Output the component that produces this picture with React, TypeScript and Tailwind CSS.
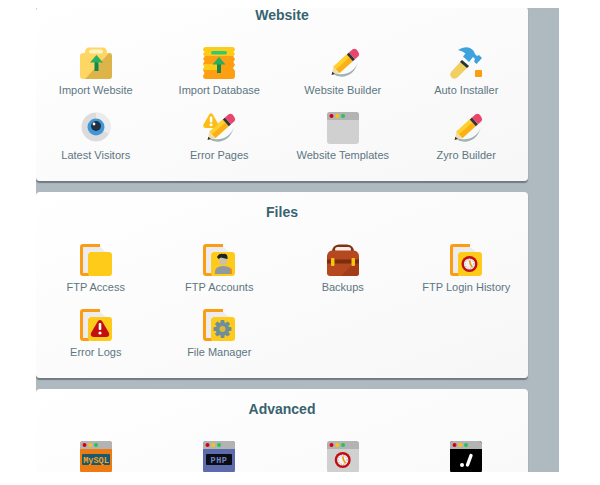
import React from "react";

const Pencil = () => (
  <>
    <path d="M5 25 C9 32 27 33 31 14.5 C28 26 15 30 7 25.5Z" fill="#9db4b2" />
    <path d="M6.4 19.7 L19.8 7.6 L25.8 14.2 L12.4 26.3Z" fill="#fbb015" />
    <path d="M6.4 19.7 L19.8 7.6 L22.3 10.4 L8.9 22.5Z" fill="#ffd02e" />
    <path d="M5 27 L6.4 19.7 L12.4 26.3Z" fill="#f3dba8" />
    <path d="M4.6 28 L5.4 24.8 L7.8 26.9Z" fill="#2f2f2f" />
    <path d="M19.8 7.6 L22 5.6 L28 12.2 L25.8 14.2Z" fill="#333" />
    <path d="M22 5.6 L25.7 2.3 Q27.5 1 29.5 2.6 L31 4.4 Q32.6 6.5 31.7 8.9 L28 12.2Z" fill="#e8466c" />
  </>
);

const Win = ({ body = "#d0d0d0" }: { body?: string }) => (
  <>
    <rect x="0" y="0" width="32" height="32" rx="3" fill={body} />
    <path d="M0 8 V3 Q0 0 3 0 H29 Q32 0 32 3 V8Z" fill="#b3b3b3" />
    <circle cx="4.5" cy="4" r="2" fill="#d60012" />
    <circle cx="10.3" cy="4" r="2" fill="#fbc30d" />
    <circle cx="16" cy="4" r="2" fill="#22c55e" />
  </>
);

const Folder = ({ children }: { children?: React.ReactNode }) => (
  <>
    <path d="M3 0 H20 V3 H4 Q3 3 3 4 V29 H9 V32 H3 Q0 32 0 29 V3 Q0 0 3 0Z" fill="#fb9d14" />
    <path d="M3 3 H20 L26 8 H8 V29 H3Z" fill="#ececf0" />
    <rect x="8" y="8" width="24" height="24" rx="3" fill="#fecb1a" />
    {children}
  </>
);

const Clock = ({ cx, cy, r }: { cx: number; cy: number; r: number }) => (
  <>
    <circle cx={cx} cy={cy} r={r} fill="#c40d10" />
    <circle cx={cx} cy={cy} r={r * 0.7} fill="#f1f3f4" />
    <circle cx={cx} cy={cy} r={r * 0.55} fill="none" stroke="#8fa3ad" strokeWidth="1" strokeDasharray="1 1.6" />
    <path d={`M${cx} ${cy - r * 0.45} L${cx + r * 0.1} ${cy} L${cx + r * 0.35} ${cy + r * 0.4}`} stroke="#f59a0b" strokeWidth="1.7" fill="none" />
  </>
);

const Arrow = ({ x = 16, y = 9 }: { x?: number; y?: number }) => (
  <>
    <rect x={x - 2} y={y + 6} width="4" height="10" fill="#17864b" />
    <path d={`M${x} ${y} L${x + 6.5} ${y + 7.5} H${x - 6.5}Z`} fill="#27ae60" />
  </>
);

const icons: Record<string, React.ReactNode> = {
  importWebsite: (
    <>
      <path d="M5 6 Q5 .5 9 .5 H23 Q27 .5 27 6 L29 6 Q32 6 32 9 V29 Q32 32 29 32 H3 Q0 32 0 29 V9 Q0 6 3 6Z" fill="#fdd663" />
      <path d="M32 9 V29 Q32 32 29 32 H5 L29 6 Q32 6 32 9Z" fill="#dcb44a" />
      <rect x="9" y="2.5" width="14" height="4" rx="2" fill="#fff3c4" />
      <Arrow x={16.5} y={8} />
    </>
  ),
  importDatabase: (
    <>
      <path d="M3 0 H29 Q32 0 32 3 L30.5 5 L32 7 L30 10 H2 L0 7 L1.5 5 L0 3 Q0 0 3 0Z" fill="#fecb1a" />
      <rect x="8" y="4" width="16" height="3.5" rx="1.7" fill="#2ecc71" />
      <path d="M2 9 H30 L32 12 L30.5 15 L32 18 L30 21 L32 24 V29 Q32 32 29 32 H3 Q0 32 0 29 L1.5 26 L0 23 V22 L2 20 L0 17 L1.5 14 L0 12Z" fill="#fd9f12" />
      <path d="M0 17 H16 V23 H0 L1.5 20Z" fill="#fecb1a" />
      <Arrow x={16} y={10} />
    </>
  ),
  pencil: <Pencil />,
  hammer: (
    <>
      <path d="M1 25 L12 13 L19 19 L8 30 Q5 33 2 31 Q-1 28 1 25Z" fill="#f0cf63" />
      <path d="M10 15 L12 13 L19 19 L17 21Z" fill="#26323a" />
      <path d="M8 3 Q14 -1 20 1 Q24 3 25 7 L27 9 L29 8 L32 11 L26.5 17 L24 14.5 L25 12 L23 10 L19 15 L13 9.5 L15.5 6.5 Q13 4 8 3Z" fill="#3ea2dc" />
      <rect x="25" y="23" width="7" height="7" rx="1" fill="#fb9d14" />
    </>
  ),
  eye: (
    <>
      <circle cx="16" cy="15" r="14.5" fill="#dcdcdc" />
      <path d="M16 .5 A14.5 14.5 0 0 1 29 22 L16 15Z" fill="#ececec" />
      <circle cx="16" cy="15" r="8.5" fill="#3f97d8" />
      <circle cx="16" cy="14" r="5" fill="#23303d" />
      <circle cx="14" cy="12" r="1.4" fill="#fff" />
    </>
  ),
  errorPages: (
    <>
      <path d="M6.5 2 Q8 .5 9.5 2 L15.5 12.5 Q16.5 16 13 16 H3 Q-.5 16 .5 12.5Z" fill="#fdbd14" />
      <rect x="6.8" y="4.5" width="2.6" height="6" rx="1" fill="#fff" />
      <circle cx="8" cy="12.7" r="1.5" fill="#fff" />
      <Pencil />
    </>
  ),
  templates: <Win />,
  ftpAccess: <Folder />,
  ftpAccounts: (
    <Folder>
      <path d="M12 28 Q12 22 20 22 Q29 22 29 28 V30 H12Z" fill="#8e9aa0" />
      <path d="M27 24 L29 25 V30 H27Z" fill="#ee8c22" />
      <circle cx="20" cy="17" r="4" fill="#c9c2a8" />
      <path d="M14 13 Q16 9 20 10 Q25 9 24.5 15 L22 14.5 L18 13.5 L15.5 15Z" fill="#1d2429" />
    </Folder>
  ),
  backups: (
    <>
      <path d="M5 8 Q5 1 12 .5 H20 Q27 1 27 8Z" fill="#7f3211" />
      <rect x="8" y="3" width="16" height="5" rx="2.5" fill="#f4ece6" />
      <path d="M5 6.5 H27 Q31.5 7 32 12 V29 Q32 32 29 32 H3 Q0 32 0 29 V12 Q0.5 7 5 6.5Z" fill="#b5481f" />
      <path d="M32 14 V29 Q32 32 29 32 H14Z" fill="#a23c19" />
      <rect x="0" y="15.5" width="32" height="4" fill="#7a2e10" />
      <rect x="4" y="14" width="3.5" height="8" rx="1" fill="#fbc30d" />
      <rect x="24.5" y="14" width="3.5" height="8" rx="1" fill="#fbc30d" />
    </>
  ),
  ftpHistory: <Folder><Clock cx={19.5} cy={20} r={8} /></Folder>,
  errorLogs: (
    <Folder>
      <path d="M18 12 Q20 10 22 12 L29 24 Q30 28 26 28 H14 Q10 28 11 24Z" fill="#c40d10" />
      <rect x="18.7" y="14" width="2.6" height="7" rx="1" fill="#fff" />
      <circle cx="20" cy="24" r="1.6" fill="#fff" />
    </Folder>
  ),
  fileManager: (
    <Folder>
      <g transform="translate(19.5 20)">
        {[0, 45, 90, 135].map((a) => (
          <rect key={a} x="-2" y="-9" width="4" height="18" rx="1" fill="#6f8d9b" transform={`rotate(${a})`} />
        ))}
        <circle r="6.8" fill="#6f8d9b" />
        <circle r="3" fill="#d9b93a" />
      </g>
    </Folder>
  ),
  mysql: (
    <>
      <Win body="#ee7a12" />
      <rect x="2" y="13" width="28" height="11" rx="1" fill="#155a70" />
      <text x="16" y="21.5" textAnchor="middle" fontSize="8.5" fontWeight="700" fill="#ff9f1c" fontFamily="Liberation Mono, monospace">MySQL</text>
    </>
  ),
  php: (
    <>
      <Win body="#5b6bab" />
      <rect x="3" y="13" width="26" height="11" rx="1" fill="#0c0c14" />
      <text x="16" y="21.5" textAnchor="middle" fontSize="8.5" fontWeight="700" letterSpacing=".6" fill="#7183c4" fontFamily="Liberation Mono, monospace">PHP</text>
    </>
  ),
  speed: (
    <>
      <Win />
      <Clock cx={15.7} cy={19} r={8} />
    </>
  ),
  terminal: (
    <>
      <Win body="#000000" />
      <circle cx="12" cy="24" r="2" fill="#fff" />
      <path d="M21 14.5 L17.5 24" stroke="#fff" strokeWidth="3.4" strokeLinecap="round" />
    </>
  ),
};

const Icon = ({ name }: { name: string }) => (
  <svg viewBox="0 0 32 32" width="32" height="32" className="block overflow-visible">
    {icons[name]}
  </svg>
);

type Item = { icon: string; label?: string };

const Section = ({ title, items, className }: { title: string; items: Item[]; className: string }) => (
  <section className={`rounded-[4px] bg-gradient-to-br from-white to-[#f7f7f8] shadow-[0_1.5px_1px_#6f7b82] ${className}`}>
    <h2 className="text-center text-[14px] leading-[16px] font-bold text-[#38636f]">{title}</h2>
    <div className="-ml-[2px] mt-[24px] grid grid-cols-4">
      {items.map((item) => (
        <div key={item.icon + (item.label ?? "")} className="flex h-[65px] flex-col items-center">
          <Icon name={item.icon} />
          {item.label && <span className="mt-[4px] text-[11px] leading-[14px] whitespace-nowrap text-[#5c7682]">{item.label}</span>}
        </div>
      ))}
    </div>
  </section>
);

export default function App() {
  return (
    <div className="h-[485px] w-[600px] overflow-hidden bg-white pt-[8px] pl-[36px] font-['Liberation_Sans',Arial,sans-serif]">
      <div className="h-[464px] w-[523px] overflow-hidden bg-[#aeb9c0] pr-[31px]">
        <div className="-mt-[1px] flex flex-col gap-[11px]">
          <Section
            title="Website"
            className="h-[174px]"
            items={[
              { label: "Import Website", icon: "importWebsite" },
              { label: "Import Database", icon: "importDatabase" },
              { label: "Website Builder", icon: "pencil" },
              { label: "Auto Installer", icon: "hammer" },
              { label: "Latest Visitors", icon: "eye" },
              { label: "Error Pages", icon: "errorPages" },
              { label: "Website Templates", icon: "templates" },
              { label: "Zyro Builder", icon: "pencil" },
            ]}
          />
          <Section
            title="Files"
            className="h-[186px] pt-[12px]"
            items={[
              { label: "FTP Access", icon: "ftpAccess" },
              { label: "FTP Accounts", icon: "ftpAccounts" },
              { label: "Backups", icon: "backups" },
              { label: "FTP Login History", icon: "ftpHistory" },
              { label: "Error Logs", icon: "errorLogs" },
              { label: "File Manager", icon: "fileManager" },
            ]}
          />
          <Section
            title="Advanced"
            className="h-[186px] pt-[12px]"
            items={[{ icon: "mysql" }, { icon: "php" }, { icon: "speed" }, { icon: "terminal" }]}
          />
        </div>
      </div>
    </div>
  );
}
